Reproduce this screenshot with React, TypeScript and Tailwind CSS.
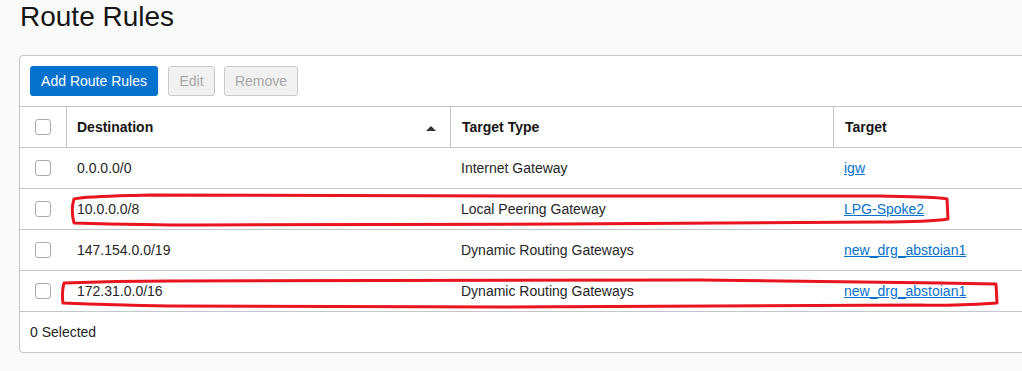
const rows = [
  { dest: "0.0.0.0/0", type: "Internet Gateway", target: "igw" },
  { dest: "10.0.0.0/8", type: "Local Peering Gateway", target: "LPG-Spoke2" },
  { dest: "147.154.0.0/19", type: "Dynamic Routing Gateways", target: "new_drg_abstoian1" },
  { dest: "172.31.0.0/16", type: "Dynamic Routing Gateways", target: "new_drg_abstoian1" },
];

function Checkbox() {
  return <span className="block w-4 h-4 rounded-[3px] border border-[#a9abae] bg-white" />;
}

export default function App() {
  return (
    <div className="relative w-[1022px] h-[371px] overflow-hidden bg-[#fafafa] text-[#262626] font-['Liberation_Sans',Arial,sans-serif]">
      <h1 className="pl-5 text-[28px] leading-[34px] text-[#161513] font-normal">Route Rules</h1>

      {/* Card */}
      <div className="mt-[21px] ml-[19px] w-[1080px] bg-white border border-[#c4c6ca] rounded-[4px]">
        {/* Toolbar */}
        <div className="flex items-center px-[10px] pt-[10px] pb-[10px] border-b border-[#c4c6ca]">
          <button className="h-[30px] w-[128px] rounded-[3px] bg-[#0572ce] text-white text-[14px]">
            Add Route Rules
          </button>
          <button className="ml-[10px] h-[30px] w-[47px] rounded-[3px] border border-[#c8c9cb] bg-[#f1f1f1] text-[#a8a8a8] text-[14px]">
            Edit
          </button>
          <button className="ml-[9px] h-[30px] w-[74px] rounded-[3px] border border-[#c8c9cb] bg-[#f1f1f1] text-[#a8a8a8] text-[14px]">
            Remove
          </button>
        </div>

        {/* Header */}
        <div className="grid grid-cols-[46px_384px_383px_1fr] h-[41px] border-b border-[#c4c6ca] text-[14px] font-bold text-[#161513]">
          <div className="flex items-center pl-[15px]">
            <Checkbox />
          </div>
          <div className="flex items-center justify-between pl-[10px] pr-[14px] border-l border-[#c4c6ca]">
            <span>Destination</span>
            <svg width="10" height="5" viewBox="0 0 10 5" className="mt-[2px]">
              <path d="M0 5 L5 0 L10 5 Z" fill="#333" />
            </svg>
          </div>
          <div className="flex items-center pl-[11px] border-l border-[#c4c6ca]">Target Type</div>
          <div className="flex items-center pl-[11px] border-l border-[#c4c6ca]">Target</div>
        </div>

        {/* Rows */}
        {rows.map((r, i) => (
          <div
            key={i}
            className="grid grid-cols-[46px_384px_383px_1fr] h-[41px] border-b border-[#c4c6ca] text-[14px] text-[#262626]"
          >
            <div className="flex items-center pl-[15px]">
              <Checkbox />
            </div>
            <div className="flex items-center pl-[11px]">{r.dest}</div>
            <div className="flex items-center pl-[11px]">{r.type}</div>
            <div className="flex items-center pl-[11px]">
              <a href="#" className="text-[#0572ce] underline">{r.target}</a>
            </div>
          </div>
        ))}

        {/* Footer */}
        <div className="h-[40px] flex items-center pl-[10px] text-[14px] text-[#262626]">0 Selected</div>
      </div>

      {/* Red annotations */}
      <svg
        className="absolute inset-0 pointer-events-none"
        width="1022"
        height="371"
        viewBox="0 0 1022 371"
        fill="none"
        stroke="#e8141e"
        strokeWidth="3"
        strokeLinejoin="round"
      >
        <path d="M74 199 C90 196 120 196 150 195 L520 196 L880 196 C920 197 940 197 947 199 L948 219 C930 222 900 222 880 222 L560 224 L200 225 C150 225 110 224 74 223 C72 215 72 205 74 199 Z" />
        <path d="M64 283 C90 282 130 281 170 281 L700 280 C820 281 900 282 940 283 L996 284 L997 303 C980 304 950 306 920 305 L500 307 L170 306 C120 305 90 304 63 303 C62 296 62 290 64 283 Z" />
      </svg>
    </div>
  );
}
